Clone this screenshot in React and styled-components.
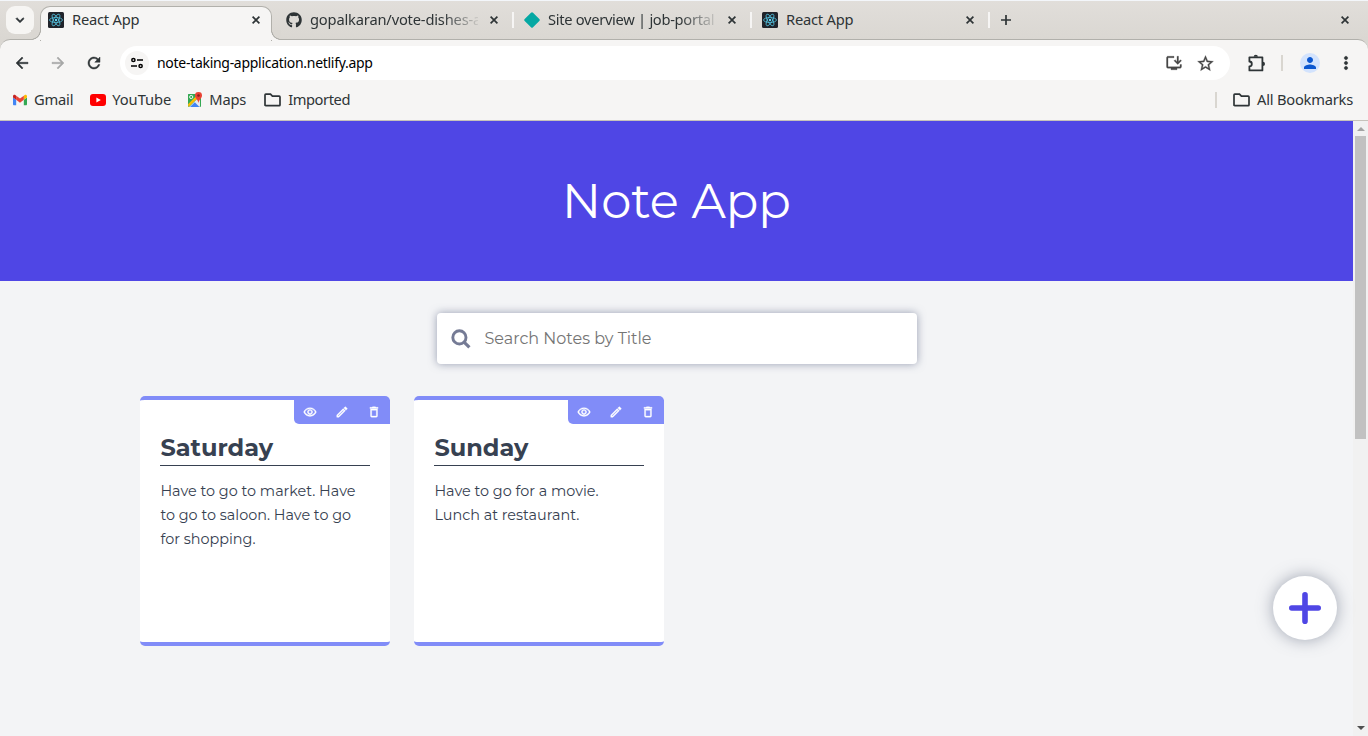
import React from "react";
import styled, { createGlobalStyle, css } from "styled-components";
import { MdArrowBack, MdArrowForward, MdRefresh, MdStarBorder, MdMoreVert, MdPerson, MdOutlineInstallDesktop, MdOutlineRemoveRedEye, MdOutlineEdit, MdDeleteOutline, MdKeyboardArrowDown } from "react-icons/md";
import { FaGithub } from "react-icons/fa";

const GlobalStyle = createGlobalStyle`
  * { box-sizing: border-box; }
  body { margin: 0; overflow: hidden; font-family: "Noto Sans", sans-serif; color: #2e3436; }
  svg { display: block; flex: none; }
  svg[fill="currentColor"] path[fill="none"] { stroke: none; }
  h1, h2, p { margin: 0; }
`;

const Window = styled.div`
  width: 1368px;
  height: 736px;
  display: flex;
  flex-direction: column;
  background: #dad7d2;
`;

const TabStrip = styled.header`
  height: 39px;
  flex: none;
  display: flex;
  align-items: flex-start;
  padding-left: 6px;
  background: linear-gradient(#e1deda, #dad7d2);
  border-top: 1px solid #f3f6fa;
`;

const TabSearch = styled.button`
  width: 28px;
  height: 28px;
  margin: 5px 2px 0 0;
  padding: 0;
  display: grid;
  place-items: center;
  border: 0;
  border-radius: 9px;
  background: #f6f5f3;
  color: #2e3436;
  svg { stroke-width: 1px; }
`;

const activeTab = css`
  border-left-color: transparent;
  &::before {
    content: "";
    position: absolute;
    z-index: 0;
    left: 2px;
    right: 2px;
    top: -6px;
    height: 34px;
    border: 1px solid #b1b0ab;
    border-bottom: 0;
    border-radius: 10px 10px 0 0;
    background: #f6f5f4;
  }
`;

const Flare = styled.i`
  position: absolute;
  z-index: 2;
  bottom: -12px;
  ${(p) => (p.$side === "left" ? "left: -7px;" : "right: -7px;")}
  width: 10px;
  height: 10px;
  background: radial-gradient(
    circle at ${(p) => (p.$side === "left" ? "0 0" : "100% 0")},
    #dad7d2 8.6px, #b1b0ab 9px, #b1b0ab 9.7px, #f6f5f4 10.2px
  );
`;

const Tab = styled.div`
  position: relative;
  width: 238px;
  height: 16px;
  margin-top: 11px;
  padding: 0 14px 0 10px;
  display: flex;
  align-items: center;
  border-left: 2px solid ${(p) => (p.$divider ? "#f6f5f4" : "transparent")};
  ${(p) => p.$active && activeTab}
  > svg { position: relative; z-index: 1; }
`;

const TabTitle = styled.span`
  position: relative;
  z-index: 1;
  width: 168px;
  margin: 0 8px;
  padding-bottom: 2px;
  flex: none;
  white-space: nowrap;
  font-size: 14.7px;
  line-height: 22px;
  letter-spacing: ${(p) => p.$spacing || "-0.22px"};
  ${(p) => p.$fade && css`mask-image: linear-gradient(90deg, #000 132px, transparent 172px);`}
`;

const TabDivider = styled.span`
  width: 2px;
  height: 16px;
  margin: 11px 11px 0 0;
  background: #f6f5f4;
`;

const StripButton = styled.button`
  padding: 0;
  border: 0;
  background: none;
  color: #2e3436;
  margin: ${(p) => p.$margin};
`;

const Toolbar = styled.div`
  height: 42px;
  flex: none;
  display: flex;
  align-items: center;
  padding: 5px 4px 0 14px;
  border-top: 1px solid #b1b0ab;
  border-radius: 10px 10px 0 0;
  background: #f6f5f4;
`;

const NavButton = styled.button`
  width: 36px;
  height: 34px;
  margin-left: ${(p) => p.$gap || "0"};
  padding: 0;
  display: grid;
  place-items: center;
  flex: none;
  border: 0;
  background: none;
  color: ${(p) => (p.$dim ? "#a7a8a7" : "#2e3436")};
  svg { stroke-width: 0.6px; }
`;

const Address = styled.div`
  flex: 1;
  height: 34px;
  display: flex;
  align-items: center;
  padding: 0 15px 0 5px;
  margin-left: 8px;
  border-radius: 17px;
  background: #fff;
  color: #000;
  font-size: 14px;
`;

const SiteInfo = styled.span`
  width: 24px;
  height: 24px;
  margin-right: 8px;
  display: grid;
  place-items: center;
  border-radius: 50%;
  background: #f6f5f4;
`;

const Url = styled.span`
  flex: 1;
  padding-bottom: 1px;
  letter-spacing: -0.29px;
`;

const AddressActions = styled.div`
  display: flex;
  align-items: center;
  gap: 13px;
  color: #474747;
  svg { stroke-width: 0.4px; }
`;

const Rule = styled.span`
  width: 2px;
  height: 16px;
  background: #d9d6d0;
  margin: ${(p) => p.$margin || "0"};
`;

const Avatar = styled.span`
  width: 20px;
  height: 20px;
  display: grid;
  place-items: center;
  border-radius: 50%;
  background: #d3e3fd;
  color: #0b57d0;
`;

const Bookmarks = styled.nav`
  height: 40px;
  flex: none;
  display: flex;
  align-items: center;
  padding: 0 15px 2px 13px;
  background: #f6f5f4;
  border-bottom: 1px solid #c6c2bb;
`;

const Bookmark = styled.span`
  display: flex;
  align-items: center;
  gap: ${(p) => p.$gap || "6px"};
  margin-right: ${(p) => p.$after || "0"};
  font-size: 14.7px;
  line-height: 22px;
  letter-spacing: ${(p) => p.$spacing || "0"};
  white-space: nowrap;
`;

const BookmarkName = styled.span`
  padding-bottom: 2px;
`;

const Spacer = styled.span`
  flex: 1;
`;

const Viewport = styled.div`
  flex: 1;
  min-height: 0;
  display: flex;
  background: #f3f4f6;
`;

const Page = styled.main`
  position: relative;
  flex: 1;
  font-family: "Montserrat", Inter, sans-serif;
  color: #374151;
`;

const Banner = styled.header`
  height: 160px;
  display: grid;
  place-items: center;
  background: #4f46e5;
  color: #fff;
`;

const Heading = styled.h1`
  font-size: 48px;
  line-height: 48px;
  font-weight: 400;
`;

const SearchBox = styled.label`
  width: 480px;
  height: 51px;
  margin: 32px auto;
  display: flex;
  align-items: center;
  gap: 14px;
  padding: 0 14px;
  border-radius: 4px;
  background: #fff;
  color: #757b95;
  box-shadow: 0 0 8px rgba(75, 85, 120, 0.55);
`;

const SearchInput = styled.input`
  flex: 1;
  padding: 0;
  border: 0;
  outline: 0;
  font: 400 16px/24px "Montserrat", Inter, sans-serif;
  &::placeholder { color: #757575; opacity: 1; }
`;

const Notes = styled.section`
  display: flex;
  gap: 24px;
  padding-left: 140.4px;
`;

const NoteCard = styled.article`
  position: relative;
  width: 250px;
  height: 250px;
  padding: 32px 20px 0;
  border: solid #818cf8;
  border-width: 4px 0;
  border-radius: 5px;
  background: #fff;
`;

const NoteActions = styled.div`
  position: absolute;
  top: 0;
  right: 0;
  width: 96px;
  height: 24px;
  display: flex;
  align-items: center;
  justify-content: space-around;
  border-radius: 0 0 0 5px;
  background: #818cf8;
  color: #fff;
  svg { stroke-width: 0.6px; }
`;

const NoteTitle = styled.h2`
  height: 34px;
  font-size: 24px;
  line-height: 32px;
  font-weight: 700;
  border-bottom: 1px solid #374151;
`;

const NoteText = styled.p`
  margin-top: 13px;
  font-size: 14.4px;
  line-height: 24px;
  font-weight: 400;
`;

const AddButton = styled.button`
  position: absolute;
  right: 16px;
  bottom: 96px;
  width: 64px;
  height: 64px;
  padding: 0;
  display: grid;
  place-items: center;
  border: 0;
  border-radius: 50%;
  background: #fff;
  color: #4f46e5;
  box-shadow: 0 0 16px rgba(75, 85, 110, 0.5);
`;

const Scrollbar = styled.div`
  width: 15px;
  display: flex;
  flex-direction: column;
  align-items: center;
  background: #f1f1f1;
`;

const Arrow = styled.i`
  margin: ${(p) => (p.$up ? "6px 0 5px" : "0 0 6px")};
  border: solid transparent;
  border-width: ${(p) => (p.$up ? "0 4px 4px" : "4px 4px 0")};
  border-${(p) => (p.$up ? "bottom" : "top")}-color: ${(p) => (p.$up ? "#a3a3a3" : "#505050")};
`;

const Thumb = styled.div`
  width: 11px;
  height: 303px;
  margin-bottom: auto;
  background: #c1c1c1;
`;

const ReactIcon = () => (
  <svg width="16" height="16" viewBox="0 0 32 32">
    <rect width="32" height="32" rx="3" fill="#20232a" />
    <g fill="none" stroke="#53c1de" strokeWidth="1.6">
      <ellipse cx="16" cy="16" rx="13" ry="5" />
      <ellipse cx="16" cy="16" rx="13" ry="5" transform="rotate(60 16 16)" />
      <ellipse cx="16" cy="16" rx="13" ry="5" transform="rotate(120 16 16)" />
    </g>
    <circle cx="16" cy="16" r="2.4" fill="#61dafb" />
  </svg>
);

const SiteIcon = () => (
  <svg width="16" height="16" viewBox="0 0 16 16">
    <path d="M7 .8a1.4 1.4 0 0 1 2 0L15.3 7a1.4 1.4 0 0 1 0 2L9 15.2a1.4 1.4 0 0 1-2 0L.7 9a1.4 1.4 0 0 1 0-2z" fill="#05a8a3" />
  </svg>
);

const CloseIcon = () => (
  <svg width="8" height="8" viewBox="0 0 8 8" fill="none" stroke="#2e3436" strokeWidth="1.7">
    <path d="M.6.6l6.8 6.8M7.4.6L.6 7.4" />
  </svg>
);

const NewTabIcon = () => (
  <svg width="10" height="10" viewBox="0 0 10 10" fill="none" stroke="#2e3436" strokeWidth="1.7">
    <path d="M5 0v10M0 5h10" />
  </svg>
);

const TuneIcon = () => (
  <svg width="12" height="12" viewBox="0 0 12 12" fill="none" stroke="#000" strokeWidth="1.5">
    <circle cx="2.4" cy="3" r="1.6" />
    <path d="M6 3h6M0 9h6" />
    <circle cx="9.6" cy="9" r="1.6" />
  </svg>
);

const PuzzleIcon = () => (
  <svg width="18" height="18" viewBox="0 0 18 18">
    <path d="M2.4 3.3h13v13.1h-13v-4.1a2.4 2.4 0 0 0 0-4.8z" fill="none" stroke="#2e3436" strokeWidth="1.8" strokeLinejoin="round" />
    <path d="M6.7 2.8a2.1 2.1 0 0 1 4.2 0zM15.9 7.8a2.1 2.1 0 0 1 0 4.2z" fill="#2e3436" />
  </svg>
);

const GmailIcon = () => (
  <svg width="14" height="12" viewBox="52 42 88 66">
    <path fill="#4285f4" d="M58 108h14V74L52 59v43c0 3.32 2.69 6 6 6" />
    <path fill="#34a853" d="M120 108h14c3.32 0 6-2.69 6-6V59l-20 15" />
    <path fill="#fbbc04" d="M120 48v26l20-15v-8c0-7.42-8.47-11.65-14.4-7.2" />
    <path fill="#ea4335" d="M72 74V48l24 18 24-18v26L96 92" />
    <path fill="#c5221f" d="M52 51v8l20 15V48l-5.6-4.2c-5.94-4.45-14.4-.22-14.4 7.2" />
  </svg>
);

const YouTubeIcon = () => (
  <svg width="16" height="12" viewBox="0 0 16 12">
    <rect width="16" height="12" rx="3" fill="#f00" />
    <path d="M6.4 3.4v5.2L10.8 6z" fill="#fff" />
  </svg>
);

const MapsIcon = () => (
  <svg width="16" height="16" viewBox="0 0 16 16">
    <rect x="1" y="2" width="13" height="13" rx="1" fill="#34a853" />
    <path d="M2 15L13 4v10a1 1 0 0 1-1 1z" fill="#e8eaed" />
    <path d="M3 15l4.8-4.8L12.5 15z" fill="#4285f4" />
    <path d="M1 12L11 2l2 2L1.5 15z" fill="#fbbc04" />
    <path d="M1 12V3a1 1 0 0 1 1-1h9z" fill="#34a853" />
    <circle cx="4.2" cy="5" r="1.6" fill="none" stroke="#fff" strokeWidth=".9" />
    <path d="M11.5 0a3.5 3.5 0 0 1 3.5 3.6c0 2.6-2.6 3.6-3.5 7.4-.9-3.8-3.5-4.8-3.5-7.4A3.5 3.5 0 0 1 11.5 0z" fill="#ea4335" />
    <circle cx="11.5" cy="3.5" r="1.3" fill="#8c211b" />
  </svg>
);

const FolderIcon = () => (
  <svg width="17" height="14" viewBox="0 0 17 14">
    <path d="M1.8 1.2h4.7l1.9 2h6.8c.5 0 .8.3.8.8v7.9c0 .5-.3.8-.8.8H1.8c-.5 0-.8-.3-.8-.8V2c0-.5.3-.8.8-.8z" fill="none" stroke="#2e3436" strokeWidth="1.7" />
  </svg>
);

const MagnifierIcon = () => (
  <svg width="20" height="20" viewBox="0 0 20 20" fill="none" stroke="currentColor">
    <circle cx="8.4" cy="8.4" r="6.6" strokeWidth="2.9" />
    <path d="M12.8 12.8l5.6 5.6" strokeWidth="3.2" />
  </svg>
);

const PlusIcon = () => (
  <svg width="32" height="32" viewBox="0 0 32 32" fill="none" stroke="currentColor" strokeWidth="5.6" strokeLinecap="round">
    <path d="M16 2.8v26.4M2.8 16h26.4" />
  </svg>
);

const tabs = [
  { title: "React App", icon: <ReactIcon />, active: true },
  { title: "gopalkaran/vote-dishes-a", icon: <FaGithub size={16} />, fade: true, spacing: "-0.18px" },
  { title: "Site overview | job-portal", icon: <SiteIcon />, divider: true, fade: true, spacing: "-0.3px" },
  { title: "React App", icon: <ReactIcon />, divider: true },
];

const notes = [
  { title: "Saturday", text: "Have to go to market. Have to go to saloon. Have to go for shopping." },
  { title: "Sunday", text: "Have to go for a movie. Lunch at restaurant." },
];

export default function App() {
  return (
    <Window>
      <GlobalStyle />
      <TabStrip>
        <TabSearch><MdKeyboardArrowDown size={16} /></TabSearch>
        {tabs.map((tab, i) => (
          <Tab key={i} $active={tab.active} $divider={tab.divider}>
            {tab.active && <><Flare $side="left" /><Flare $side="right" /></>}
            {tab.icon}
            <TabTitle $fade={tab.fade} $spacing={tab.spacing}>{tab.title}</TabTitle>
            <Spacer />
            <CloseIcon />
          </Tab>
        ))}
        <TabDivider />
        <StripButton $margin="14px 0 0"><NewTabIcon /></StripButton>
        <Spacer />
        <StripButton $margin="15px 19px 0 0"><CloseIcon /></StripButton>
      </TabStrip>
      <Toolbar>
        <NavButton $gap="-10px"><MdArrowBack size={18} /></NavButton>
        <NavButton $dim><MdArrowForward size={18} /></NavButton>
        <NavButton><MdRefresh size={18} /></NavButton>
        <Address>
          <SiteInfo><TuneIcon /></SiteInfo>
          <Url>note-taking-application.netlify.app</Url>
          <AddressActions>
            <MdOutlineInstallDesktop size={18} />
            <MdStarBorder size={19} />
          </AddressActions>
        </Address>
        <NavButton $gap="8px"><PuzzleIcon /></NavButton>
        <Rule $margin="0 17px 0 7px" />
        <Avatar><MdPerson size={18} /></Avatar>
        <NavButton $gap="8px"><MdMoreVert size={20} /></NavButton>
      </Toolbar>
      <Bookmarks>
        <Bookmark $gap="7px" $after="17px" $spacing="-0.2px"><GmailIcon /><BookmarkName>Gmail</BookmarkName></Bookmark>
        <Bookmark $after="16px" $spacing="-0.05px"><YouTubeIcon /><BookmarkName>YouTube</BookmarkName></Bookmark>
        <Bookmark $after="18px" $spacing="-0.2px"><MapsIcon /><BookmarkName>Maps</BookmarkName></Bookmark>
        <Bookmark $gap="7px" $spacing="-0.42px"><FolderIcon /><BookmarkName>Imported</BookmarkName></Bookmark>
        <Spacer />
        <Rule $margin="0 16px 0 0" />
        <Bookmark $gap="7px" $spacing="-0.22px"><FolderIcon /><BookmarkName>All Bookmarks</BookmarkName></Bookmark>
      </Bookmarks>
      <Viewport>
        <Page>
          <Banner><Heading>Note App</Heading></Banner>
          <SearchBox>
            <MagnifierIcon />
            <SearchInput placeholder="Search Notes by Title" />
          </SearchBox>
          <Notes>
            {notes.map((note) => (
              <NoteCard key={note.title}>
                <NoteActions>
                  <MdOutlineRemoveRedEye size={14} />
                  <MdOutlineEdit size={14} />
                  <MdDeleteOutline size={14} />
                </NoteActions>
                <NoteTitle>{note.title}</NoteTitle>
                <NoteText>{note.text}</NoteText>
              </NoteCard>
            ))}
          </Notes>
          <AddButton><PlusIcon /></AddButton>
        </Page>
        <Scrollbar>
          <Arrow $up />
          <Thumb />
          <Arrow />
        </Scrollbar>
      </Viewport>
    </Window>
  );
}
